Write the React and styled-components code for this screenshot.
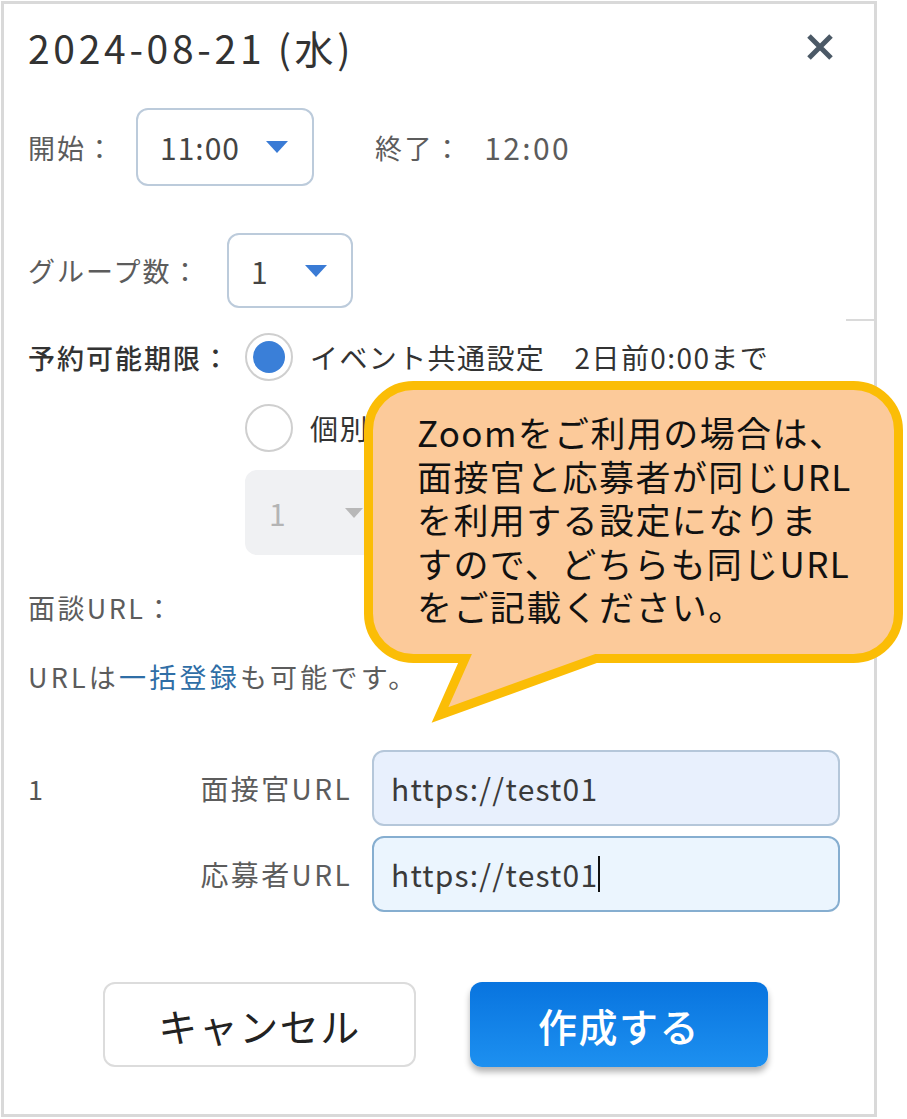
import React from "react";
import styled, { createGlobalStyle } from "styled-components";

const GlobalStyle = createGlobalStyle`
  html, body {
    margin: 0;
    padding: 0;
    background: #fff;
  }
  body {
    font-family: "Noto Sans CJK JP", "Noto Sans", sans-serif;
    color: #555;
  }
`;

const Page = styled.div`
  position: relative;
  width: 907px;
  height: 1119px;
  overflow: hidden;
  background: #fff;
`;

const Dialog = styled.div`
  box-sizing: border-box;
  width: 876px;
  height: 1116px;
  margin: 1px 0 0 1px;
  border: 3px solid #d9d9d9;
  padding: 0 0 0 24px;
  display: flex;
  flex-direction: column;
`;

const Header = styled.div`
  height: 86px;
  display: flex;
  align-items: center;
  justify-content: space-between;
  padding-right: 40px;
`;

const Title = styled.h1`
  margin: 0;
  font-size: 39px;
  font-weight: 400;
  color: #333;
  letter-spacing: 3.7px;
`;

const CloseButton = styled.button`
  border: none;
  background: none;
  padding: 0;
  width: 28px;
  height: 26px;
  display: flex;
  cursor: pointer;
`;

const Row = styled.div`
  display: flex;
  align-items: center;
  height: ${(p) => p.$h}px;
  margin-top: ${(p) => p.$mt}px;
  margin-left: ${(p) => p.$ml || 0}px;
`;

const Label = styled.span`
  width: ${(p) => p.$w}px;
  flex-shrink: 0;
  font-size: 27px;
  letter-spacing: 2px;
  color: ${(p) => (p.$strong ? "#333" : "#5c5c5c")};
  font-weight: ${(p) => (p.$strong ? 500 : 400)};
  white-space: nowrap;
`;

const Select = styled.div`
  box-sizing: border-box;
  width: ${(p) => p.$w}px;
  height: 100%;
  display: flex;
  align-items: center;
  justify-content: space-between;
  padding: 0 ${(p) => p.$pr}px 0 22px;
  border: 2px solid ${(p) => (p.$disabled ? "#f0f1f3" : "#bccbdb")};
  border-radius: 12px;
  background: ${(p) => (p.$disabled ? "#f0f1f3" : "#fff")};
  font-size: 30px;
  letter-spacing: 1px;
  color: ${(p) => (p.$disabled ? "#b4b4b4" : "#444")};
`;

const Text = styled.span`
  font-size: ${(p) => p.$size || 27}px;
  letter-spacing: ${(p) => p.$ls || 2.4}px;
  color: ${(p) => p.$color || "#5c5c5c"};
  margin-left: ${(p) => p.$ml || 0}px;
  white-space: nowrap;
`;

const Radio = styled.span`
  box-sizing: border-box;
  width: 48px;
  height: 48px;
  border-radius: 50%;
  border: 2px solid #cfcfcf;
  background: #fff;
  flex-shrink: 0;
  display: flex;
  align-items: center;
  justify-content: center;
  margin-right: 17px;

  &::after {
    content: "";
    display: ${(p) => (p.$checked ? "block" : "none")};
    width: 32px;
    height: 32px;
    border-radius: 50%;
    background: #3a7fd8;
  }
`;

const RadioText = styled.span`
  font-size: 28px;
  letter-spacing: 1.4px;
  color: #333;
  white-space: nowrap;
`;

const Link = styled.a`
  color: #2f6ea6;
  text-decoration: none;
`;

const UrlRow = styled.div`
  display: flex;
  align-items: center;
  height: 76px;
  margin-top: ${(p) => p.$mt}px;
`;

const Num = styled.span`
  width: 40px;
  font-size: 27px;
  color: #555;
`;

const UrlLabel = styled.span`
  width: 284px;
  margin-right: 20px;
  text-align: right;
  font-size: 28px;
  letter-spacing: 2.4px;
  color: #5c5c5c;
`;

const UrlField = styled.div`
  box-sizing: border-box;
  width: 468px;
  height: 76px;
  display: flex;
  align-items: center;
  padding-left: 17px;
  border: 2px solid ${(p) => (p.$focused ? "#86aed0" : "#b5c7da")};
  border-radius: 12px;
  background: ${(p) => (p.$focused ? "#ebf5fe" : "#e8f0fd")};
  font-size: 30px;
  letter-spacing: 1.2px;
  color: #3a3a3a;
`;

const Caret = styled.span`
  display: inline-block;
  width: 2px;
  height: 36px;
  background: #111;
`;

const Buttons = styled.div`
  display: flex;
  gap: 54px;
  margin-top: 70px;
  margin-left: 75px;
  height: 85px;
`;

const Button = styled.button`
  box-sizing: border-box;
  width: ${(p) => p.$w}px;
  height: 85px;
  border-radius: 12px;
  font-family: "Noto Sans CJK JP", sans-serif;
  font-size: 39px;
  letter-spacing: 1.5px;
  cursor: pointer;
  border: ${(p) => (p.$primary ? "none" : "2px solid #dcdcdc")};
  background: ${(p) =>
    p.$primary ? "linear-gradient(#0874df, #1d90f0)" : "#fff"};
  color: ${(p) => (p.$primary ? "#fff" : "#222")};
  font-weight: ${(p) => (p.$primary ? 500 : 400)};
  box-shadow: ${(p) => (p.$primary ? "0 5px 6px rgba(0,0,0,0.3)" : "none")};
`;

const EdgeTick = styled.div`
  align-self: flex-end;
  width: 28px;
  height: 2px;
  background: #dadada;
  margin-top: 11px;
  margin-bottom: -13px;
`;

const Callout = styled.div`
  position: absolute;
  left: 364px;
  top: 381px;
  width: 539px;
  height: 345px;
`;

const CalloutShape = styled.svg`
  position: absolute;
  left: 0;
  top: 0;
`;

const CalloutText = styled.p`
  position: relative;
  margin: 0;
  padding: 29px 0 0 53px;
  font-family: "Noto Sans CJK JP", sans-serif;
  font-size: 35px;
  letter-spacing: 1.4px;
  line-height: 43.5px;
  color: #111;
  white-space: nowrap;
`;

const Arrow = ({ color = "#3a7bd5", w = 22, h = 12 }) => (
  <svg width={w} height={h} viewBox="0 0 22 12">
    <polygon points="0,0 22,0 11,12" fill={color} />
  </svg>
);

export default function App() {
  return (
    <Page>
      <GlobalStyle />
      <Dialog>
        <Header>
          <Title>2024-08-21 (水)</Title>
          <CloseButton aria-label="close">
            <svg width="28" height="26" viewBox="0 0 28 26">
              <path d="M3 2 L25 24 M25 2 L3 24" stroke="#4b5966" strokeWidth="5" />
            </svg>
          </CloseButton>
        </Header>

        <Row $h={78} $mt={18}>
          <Label $w={108}>開始：</Label>
          <Select $w={178} $pr={24}>
            11:00
            <Arrow />
          </Select>
          <Text $ml={61}>終了：</Text>
          <Text $ml={21} $size={30}>12:00</Text>
        </Row>

        <Row $h={75} $mt={47}>
          <Label $w={199}>グループ数：</Label>
          <Select $w={126} $pr={24}>
            1
            <Arrow />
          </Select>
        </Row>

        <EdgeTick />

        <Row $h={48} $mt={25}>
          <Label $w={217} $strong>予約可能期限：</Label>
          <Radio $checked />
          <RadioText>イベント共通設定　2日前0:00まで</RadioText>
        </Row>

        <Row $h={48} $mt={23} $ml={217}>
          <Radio />
          <RadioText>個別設定</RadioText>
        </Row>

        <Row $h={85} $mt={18} $ml={217}>
          <Select $w={180} $pr={60} $disabled>
            1
            <Arrow color="#b8b8b8" w={18} h={10} />
          </Select>
        </Row>

        <Row $h={40} $mt={32}>
          <Text>面談URL：</Text>
        </Row>

        <Row $h={40} $mt={29}>
          <Text $ls={3.2}>
            URLは<Link href="#">一括登録</Link>も可能です。
          </Text>
        </Row>

        <UrlRow $mt={54}>
          <Num>1</Num>
          <UrlLabel>面接官URL</UrlLabel>
          <UrlField>https://test01</UrlField>
        </UrlRow>

        <UrlRow $mt={10}>
          <Num />
          <UrlLabel>応募者URL</UrlLabel>
          <UrlField $focused>
            https://test01
            <Caret />
          </UrlField>
        </UrlRow>

        <Buttons>
          <Button $w={313}>キャンセル</Button>
          <Button $w={298} $primary>作成する</Button>
        </Buttons>
      </Dialog>

      <Callout>
        <CalloutShape width="539" height="345" viewBox="0 0 539 345">
          <path
            d="M49.5 4.5 H489.5 A45 45 0 0 1 534.5 49.5 V232.5 A45 45 0 0 1 489.5 277.5 H232 L76 334 L101 277.5 H49.5 A45 45 0 0 1 4.5 232.5 V49.5 A45 45 0 0 1 49.5 4.5 Z"
            fill="#fcca9a"
            stroke="#fbbd06"
            strokeWidth="9"
            strokeLinejoin="miter"
          />
        </CalloutShape>
        <CalloutText>
          Zoomをご利用の場合は、
          <br />
          面接官と応募者が同じURL
          <br />
          を利用する設定になりま
          <br />
          すので、どちらも同じURL
          <br />
          をご記載ください。
        </CalloutText>
      </Callout>
    </Page>
  );
}
